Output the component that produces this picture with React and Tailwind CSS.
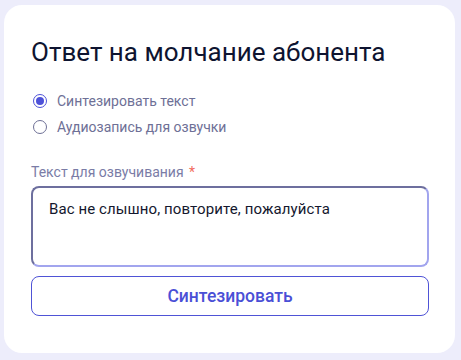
export default function App() {
  return (
    <div className="w-[461px] h-[360px] bg-[#ededfb] pt-[5px] pl-[4px] pr-[6px]" style={{ fontFamily: "Roboto, 'Noto Sans', sans-serif" }}>
      <div className="w-[451px] h-[348px] bg-white rounded-[18px] px-[27px] pt-[31px]">
        <h1 className="text-[26px] leading-[32px] text-[#0e1430] font-normal">Ответ на молчание абонента</h1>
        <div className="mt-[24px] flex flex-col gap-[8px]">
          <label className="flex items-center gap-[10px] h-[18px]">
            <span className="w-[14px] h-[14px] rounded-full border-[1.5px] border-[#4d51d8] flex items-center justify-center ml-[2px]">
              <span className="w-[8px] h-[8px] rounded-full bg-[#4d51d8]"></span>
            </span>
            <span className="text-[14px] text-[#6e7096]">Синтезировать текст</span>
          </label>
          <label className="flex items-center gap-[10px] h-[18px]">
            <span className="w-[14px] h-[14px] rounded-full border-[1.5px] border-[#6e7096] ml-[2px]"></span>
            <span className="text-[14px] text-[#6e7096]">Аудиозапись для озвучки</span>
          </label>
        </div>
        <div className="mt-[27px] text-[14px] leading-[18px] text-[#7a7ca6]">
          Текст для озвучивания <span className="ml-[2px] text-[#f26b5e]">*</span>
        </div>
        <div className="mt-[5px] w-[398px] h-[81px] rounded-[8px] border-2 border-t-[#6d6f9e] border-l-[#6d6f9e] border-r-[#a2a5ee] border-b-[#a2a5ee] px-[16px] pt-[11px] text-[15px] tracking-[0.1px] leading-[20px] text-[#14182e]">
          Вас не слышно, повторите, пожалуйста
        </div>
        <button className="mt-[9px] w-[398px] h-[40px] rounded-[8px] border border-[#4f53d6] text-[17.5px] font-medium text-[#4a4fd6] flex items-center justify-center">
          Синтезировать
        </button>
      </div>
    </div>
  );
}
